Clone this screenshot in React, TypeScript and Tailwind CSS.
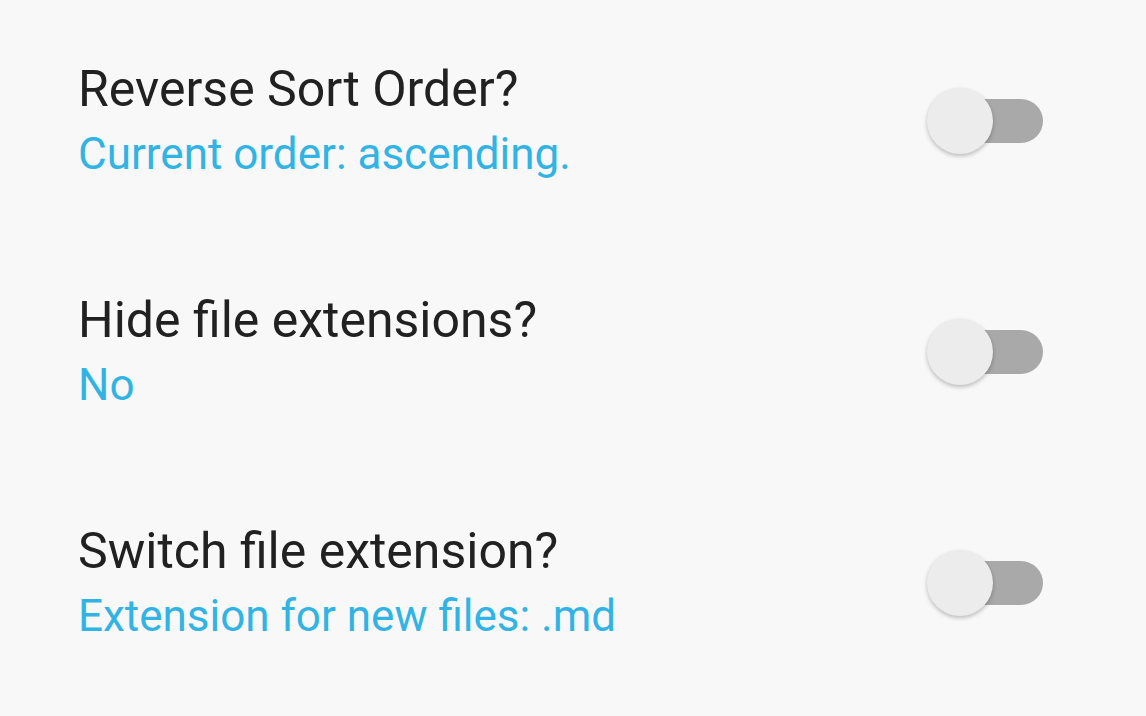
import React from "react";

type Pref = {
    title: string;
    summary: string;
};

const prefs: Pref[] = [
    { title: "Reverse Sort Order?", summary: "Current order: ascending." },
    { title: "Hide file extensions?", summary: "No" },
    { title: "Switch file extension?", summary: "Extension for new files: .md" },
];

function Toggle() {
    return (
        <div className="relative w-[116px] h-[66px] flex items-center shrink-0">
            <div className="ml-[15px] w-[101px] h-[44px] rounded-full bg-[#a9a9a9]" />
            <div className="absolute left-0 top-0 w-[66px] h-[66px] rounded-full bg-[#ececec] shadow-[0_2px_4px_rgba(0,0,0,0.25)]" />
        </div>
    );
}

export default function App() {
    return (
        <div
            className="w-[1146px] h-[716px] bg-[#f8f8f8] pl-[78px] pr-[103px] pt-[5px] overflow-hidden"
            style={{ fontFamily: "Roboto, 'Noto Sans', sans-serif" }}
        >
            {prefs.map((p) => (
                <div key={p.title} className="h-[231px] flex items-center justify-between">
                    <div className="flex flex-col">
                        <span className="text-[50px] leading-[56px] text-[#212121]">{p.title}</span>
                        <span className="text-[44px] leading-[52px] mt-[11px] text-[#31b4e4]">{p.summary}</span>
                    </div>
                    <Toggle />
                </div>
            ))}
        </div>
    );
}
